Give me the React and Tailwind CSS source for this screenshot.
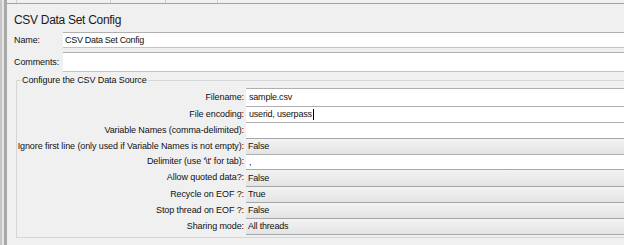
import React from "react";

const rows = [
  { label: "Filename:", value: "sample.csv", type: "text", h: "h-[18px]" },
  { label: "File encoding:", value: "userid, userpass", type: "text", h: "h-[16px]", cursor: true },
  { label: "Variable Names (comma-delimited):", value: "", type: "text", h: "h-[16px]" },
  { label: "Ignore first line (only used if Variable Names is not empty):", value: "False", type: "combo", h: "h-[16px]" },
  { label: "Delimiter (use '\\t' for tab):", value: ",", type: "text", h: "h-[15px]" },
  { label: "Allow quoted data?:", value: "False", type: "combo", h: "h-[17px]" },
  { label: "Recycle on EOF ?:", value: "True", type: "combo", h: "h-[16px]" },
  { label: "Stop thread on EOF ?:", value: "False", type: "combo", h: "h-[16px]" },
  { label: "Sharing mode:", value: "All threads", type: "combo", h: "h-[16px]" },
];

export default function App() {
  return (
    <div
      className="w-[624px] h-[245px] overflow-hidden bg-[#f0f0f0] flex text-[#111]"
      style={{ fontFamily: '"Liberation Sans", Arial, sans-serif' }}
    >
      <div className="w-[2px] shrink-0 bg-[#c6c6c6]" />
      <div className="w-[2px] shrink-0 bg-[#e6e6e6]" />
      <div className="w-[3px] shrink-0 bg-[#a9a9a9]" />
      <div className="w-[700px] shrink-0 flex flex-col">
        {/* top strip */}
        <div className="h-[4px] flex border-b border-[#a3a3a3]">
          <div className="w-[9px]" />
          <div className="w-[94px] border-l border-[#cfcfcf]" />
          <div className="w-[55px] border-l border-[#cfcfcf]" />
          <div className="w-[52px] border-l border-[#cfcfcf]" />
          <div className="flex-1 border-l border-[#cfcfcf]" />
        </div>
        <div className="pl-[7px] flex flex-col">
          <div className="h-[14px] mt-[9px] leading-[14px] text-[12px] tracking-[-0.3px] text-[#1a1a1a]">
            CSV Data Set Config
          </div>
          {/* Name */}
          <div className="mt-[5px] h-[16px] flex items-center">
            <div className="w-[49px] text-[9px] leading-[11px] tracking-[-0.1px]">Name:</div>
            <div className="flex-1 h-[16px] bg-white border-t border-b border-t-[#b0b0b0] border-b-[#c4c4c4] flex items-center pl-[2px] text-[9px] leading-[11px] tracking-[-0.3px]">
              CSV Data Set Config
            </div>
          </div>
          {/* Comments */}
          <div className="mt-[4px] h-[20px] flex items-center">
            <div className="w-[49px] text-[9px] leading-[11px] tracking-[-0.1px]">Comments:</div>
            <div className="flex-1 h-[20px] bg-white border-t border-b border-t-[#b0b0b0] border-b-[#c4c4c4]" />
          </div>
          {/* Group */}
          <div className="mt-[8px] ml-[2px] h-[158px] border border-[#d6d6d6] flex flex-col">
            <div className="-mt-[6px] ml-[4px] px-[1px] w-fit bg-[#f0f0f0] text-[9px] leading-[11px] tracking-[-0.1px]">
              Configure the CSV Data Source
            </div>
            <div className="mt-[2px] flex flex-col">
              {rows.map((r) => (
                <div key={r.label} className={`${r.h} flex items-stretch`}>
                  <div className="w-[227px] flex items-center justify-end text-[9px] leading-[11px] tracking-[-0.1px] whitespace-nowrap">
                    {r.label}
                  </div>
                  <div
                    className={
                      r.type === "combo"
                        ? "ml-[2px] flex-1 border-t border-[#a4a8ac] bg-gradient-to-b from-[#f3f3f3] to-[#e4e4e4] flex items-center pl-[2px] text-[9px] leading-[11px] tracking-[-0.2px]"
                        : "ml-[2px] flex-1 border-t border-[#b0b0b0] bg-white flex items-center pl-[3px] text-[9px] leading-[11px] tracking-[-0.2px]"
                    }
                  >
                    {r.value}
                    {r.cursor && <span className="ml-[1px] w-[1px] h-[11px] bg-black" />}
                  </div>
                </div>
              ))}
              <div className="ml-[229px] border-t border-[#a4a8ac]" />
            </div>
          </div>
        </div>
      </div>
    </div>
  );
}
